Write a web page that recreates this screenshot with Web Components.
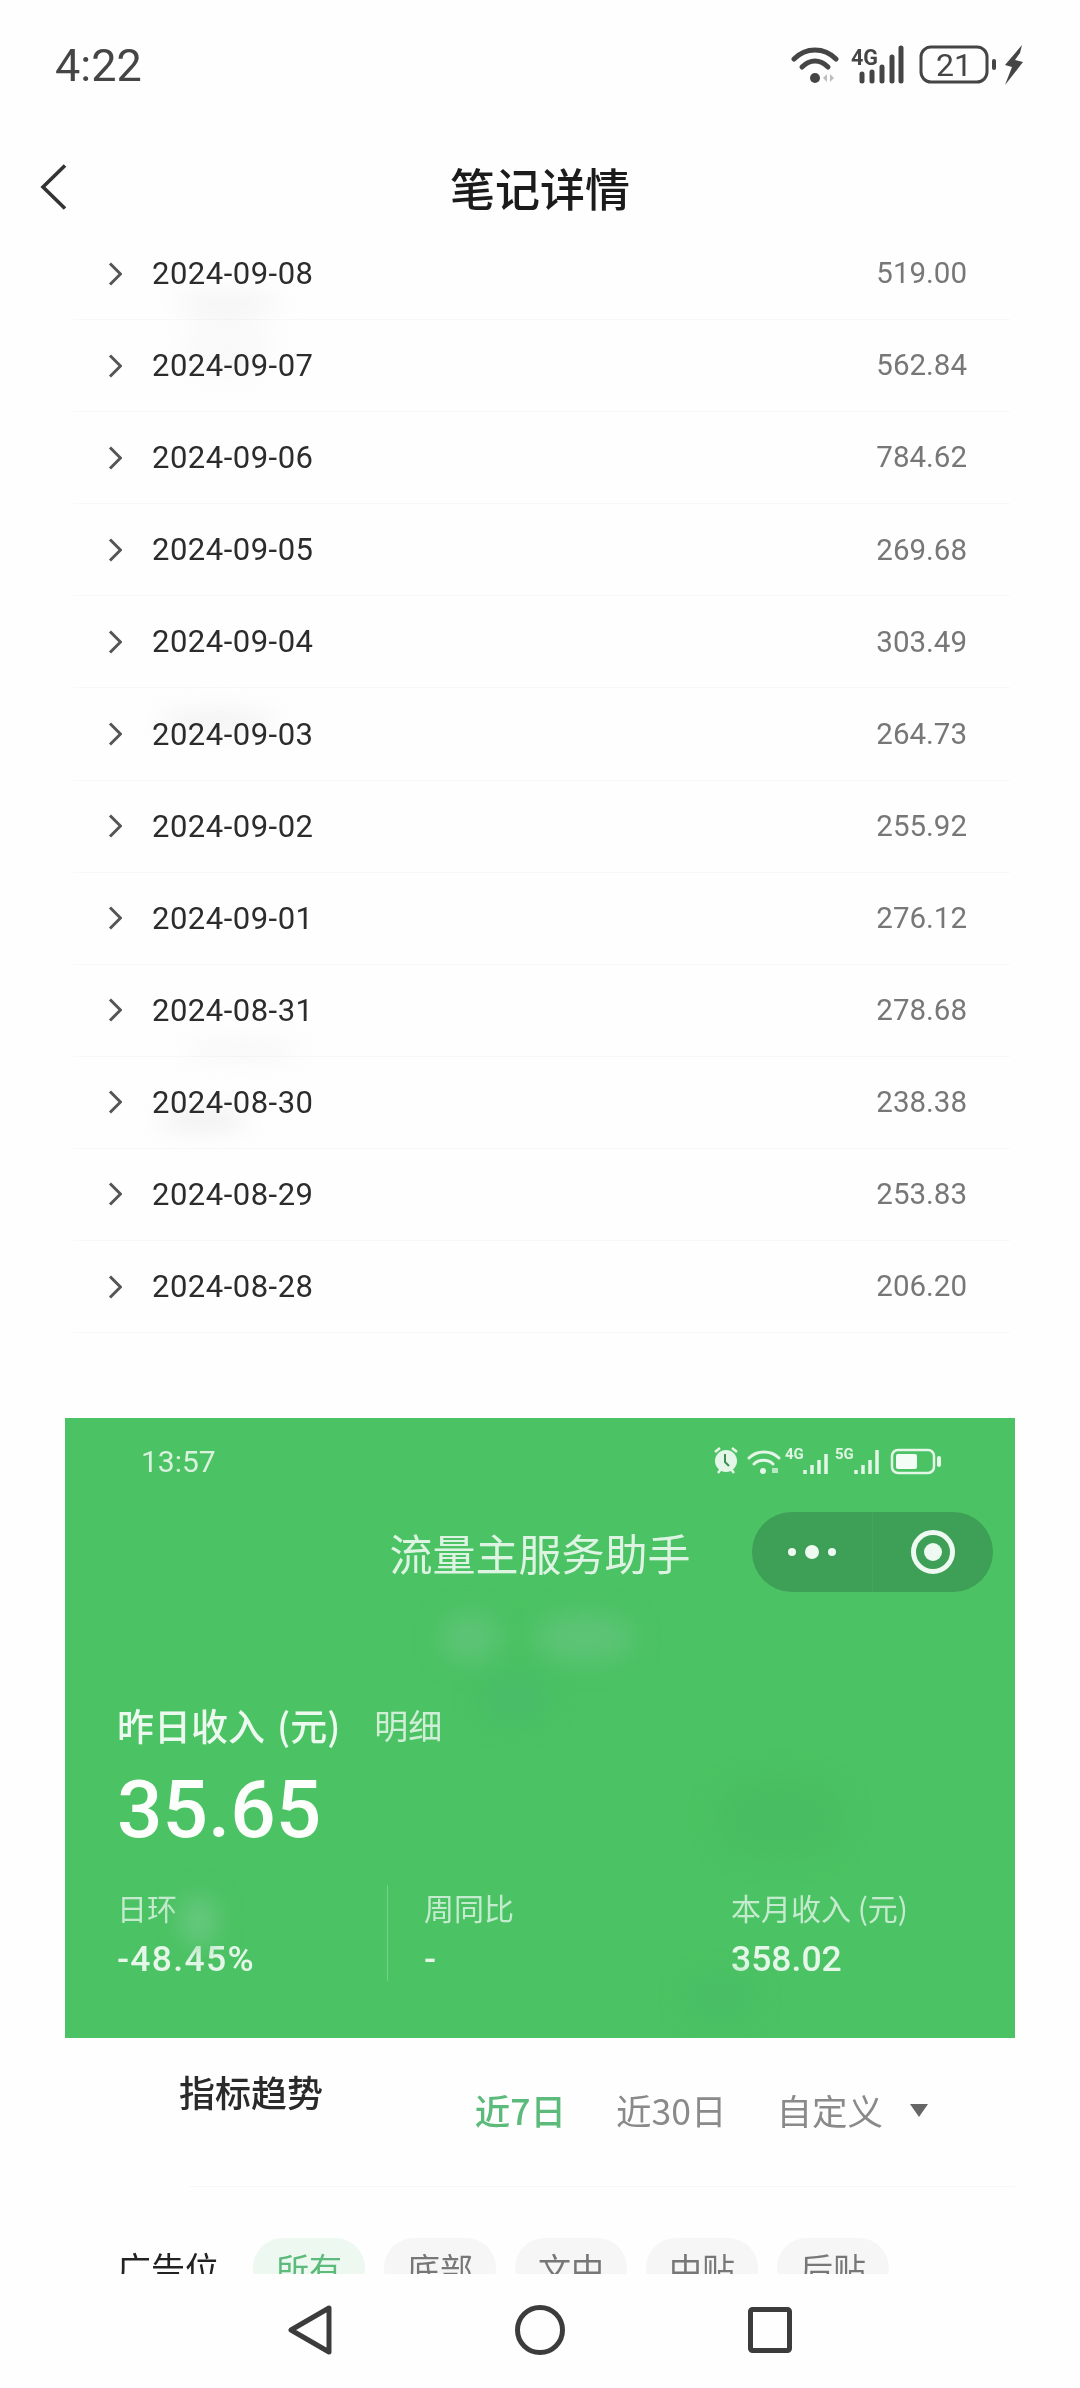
<!DOCTYPE html>
<html lang="zh">
<head>
<meta charset="utf-8">
<title>笔记详情</title>
<style>
	html, body {
		margin: 0;
		background: #fefefe;
		font-family: Roboto, "Noto Sans CJK SC", sans-serif;
	}
</style>
</head>
<body>
<phone-page>
	<status-bar slot="top"></status-bar>
	<nav-header slot="top" title="笔记详情"></nav-header>
	<income-list>
		<income-row date="2024-09-08" amount="519.00"></income-row>
		<income-row date="2024-09-07" amount="562.84"></income-row>
		<income-row date="2024-09-06" amount="784.62"></income-row>
		<income-row date="2024-09-05" amount="269.68"></income-row>
		<income-row date="2024-09-04" amount="303.49"></income-row>
		<income-row date="2024-09-03" amount="264.73"></income-row>
		<income-row date="2024-09-02" amount="255.92"></income-row>
		<income-row date="2024-09-01" amount="276.12"></income-row>
		<income-row date="2024-08-31" amount="278.68"></income-row>
		<income-row date="2024-08-30" amount="238.38"></income-row>
		<income-row date="2024-08-29" amount="253.83"></income-row>
		<income-row date="2024-08-28" amount="206.20"></income-row>
		<blur-spot style="left:100px;top:68px;width:110px;height:14px;background:#efefef;mix-blend-mode:multiply"></blur-spot>
		<blur-spot style="left:110px;top:90px;width:90px;height:60px;background:#fafafa;mix-blend-mode:multiply"></blur-spot>
		<blur-spot style="left:85px;top:486px;width:120px;height:14px;background:#ececec;mix-blend-mode:multiply"></blur-spot>
		<blur-spot style="left:85px;top:885px;width:90px;height:14px;background:#e8e8e8;mix-blend-mode:multiply"></blur-spot>
		<blur-spot style="left:110px;top:815px;width:120px;height:14px;background:#f4f4f4;mix-blend-mode:multiply"></blur-spot>
	</income-list>
	<income-card>
		<blur-spot style="left:375px;top:195px;width:60px;height:50px;background:#5cc476"></blur-spot>
		<blur-spot style="left:470px;top:195px;width:100px;height:50px;background:#5cc476"></blur-spot>
		<blur-spot style="left:415px;top:255px;width:70px;height:50px;background:#49bc68"></blur-spot>
		<blur-spot style="left:116px;top:478px;width:36px;height:50px;background:#68c880"></blur-spot>
		<blur-spot style="left:650px;top:360px;width:130px;height:80px;background:#49bd61"></blur-spot>
		<blur-spot style="left:620px;top:560px;width:70px;height:40px;background:#49bd66"></blur-spot>
	</income-card>
	<trend-tabs></trend-tabs>
	<ad-filter></ad-filter>
	<nav-keys slot="bottom"></nav-keys>
</phone-page>

<script>
// page frame: fixed top and bottom, middle is clipped like a scroll area
class PhonePage extends HTMLElement {
	constructor(){
		super();
		this.attachShadow({mode:"open"});
		this.shadowRoot.innerHTML = `
			<style>
				:host {
					display: flex;
					flex-direction: column;
					width: 1080px;
					height: 2388px;
					overflow: hidden;
					background: #fefefe;
				}
				main {
					height: 2046px;
					overflow: hidden;
					position: relative;
				}
			</style>
			<slot name="top"></slot>
			<main><slot></slot></main>
			<slot name="bottom"></slot>
		`;
	}
}
customElements.define("phone-page",PhonePage);

class BlurSpot extends HTMLElement {
	constructor(){
		super();
		this.attachShadow({mode:"open"});
		this.shadowRoot.innerHTML = `
			<style>
				:host {
					display: block;
					position: absolute;
					border-radius: 50%;
					filter: blur(12px);
					pointer-events: none;
				}
			</style>
		`;
	}
}
customElements.define("blur-spot",BlurSpot);

class StatusBar extends HTMLElement {
	constructor(){
		super();
		this.attachShadow({mode:"open"});
		this.shadowRoot.innerHTML = `
			<style>
				:host {
					display: flex;
					align-items: center;
					justify-content: space-between;
					height: 130px;
					padding: 0 57px 0 55px;
					color: #454545;
				}
				.time {
					font: 400 45px/1 Roboto, sans-serif;
				}
				.icons {
					display: flex;
					align-items: center;
				}
				svg {
					display: block;
				}
				text {
					font-family: Roboto, sans-serif;
					fill: #454545;
				}
			</style>
			<span class="time">4:22</span>
			<div class="icons">
				<svg width="48" height="40" viewBox="0 0 48 40">
					<path d="M3 14C15 2 33 2 45 14" fill="none" stroke="#454545" stroke-width="5" stroke-linecap="round"/>
					<path d="M11 22C19 14 29 14 37 22" fill="none" stroke="#454545" stroke-width="5" stroke-linecap="round"/>
					<circle cx="24" cy="33" r="5" fill="#454545"/>
					<path d="M32 33l4-4v8zM39 29l4 4-4 4z" fill="#bdbdbd"/>
				</svg>
				<svg style="margin-left:12px" width="54" height="40" viewBox="0 0 54 40">
					<text x="0" y="20" font-size="22" font-weight="700" textLength="27" lengthAdjust="spacingAndGlyphs">4G</text>
					<g stroke="#454545" stroke-width="5" stroke-linecap="round">
						<path d="M11 29V36M21 27V36M31 22V36M41 12V36M50 3V36"/>
					</g>
				</svg>
				<svg style="margin-left:14px" width="78" height="40" viewBox="0 0 78 40">
					<rect x="2" y="2" width="66" height="35" rx="10" fill="none" stroke="#454545" stroke-width="3"/>
					<text x="35" y="31" font-size="32" text-anchor="middle">21</text>
					<rect x="73" y="14" width="4" height="11" rx="2" fill="#454545"/>
				</svg>
				<svg style="margin-left:7px" width="19" height="40" viewBox="0 0 19 40">
					<path d="M18 0L1 20l7 2-7 18L19 17l-8-2 5-7z" fill="#454545"/>
				</svg>
			</div>
		`;
	}
}
customElements.define("status-bar",StatusBar);

class NavHeader extends HTMLElement {
	constructor(){
		super();
		this.attachShadow({mode:"open"});
		this.shadowRoot.innerHTML = `
			<style>
				:host {
					display: grid;
					grid-template-columns: 1fr auto 1fr;
					align-items: center;
					box-sizing: border-box;
					height: 98px;
					padding-top: 16px;
				}
				svg {
					display: block;
					margin-left: 40px;
				}
				h1 {
					margin: 0;
					font: 500 45px/1 "Noto Sans CJK SC", sans-serif;
					color: #1b1b1b;
				}
			</style>
			<svg width="28" height="46" viewBox="0 0 28 46">
				<path d="M25 1.5L3 23l22 21.5" fill="none" stroke="#333" stroke-width="3.6"/>
			</svg>
			<h1></h1>
			<span></span>
		`;
		this.shadowRoot.querySelector("h1").textContent = this.getAttribute("title");
	}
}
customElements.define("nav-header",NavHeader);

class IncomeList extends HTMLElement {
	constructor(){
		super();
		this.attachShadow({mode:"open"});
		this.shadowRoot.innerHTML = `
			<style>
				:host {
					display: block;
					position: relative;
					margin: 0 70px 0 73px;
				}
			</style>
			<slot></slot>
		`;
	}
}
customElements.define("income-list",IncomeList);

class IncomeRow extends HTMLElement {
	constructor(){
		super();
		this.attachShadow({mode:"open"});
		this.shadowRoot.innerHTML = `
			<style>
				:host {
					display: flex;
					align-items: center;
					box-sizing: border-box;
					height: 92.1px;
					padding: 0 43px 0 35px;
					border-bottom: 1.5px solid #f8f8f8;
				}
				svg {
					display: block;
				}
				.date {
					margin-left: 30px;
					font: 400 31px/1 Roboto, sans-serif;
					letter-spacing: .5px;
					color: #2c2c2c;
				}
				.amount {
					margin-left: auto;
					padding-top: 1px;
					font: 400 29.5px/1 Roboto, sans-serif;
					color: #777;
				}
			</style>
			<svg width="14" height="24" viewBox="0 0 14 24">
				<path d="M2 1.5L12.5 12 2 22.5" fill="none" stroke="#555" stroke-width="3"/>
			</svg>
			<span class="date"></span>
			<span class="amount"></span>
		`;
		this.shadowRoot.querySelector(".date").textContent = this.getAttribute("date");
		this.shadowRoot.querySelector(".amount").textContent = this.getAttribute("amount");
	}
}
customElements.define("income-row",IncomeRow);

class IncomeCard extends HTMLElement {
	constructor(){
		super();
		this.attachShadow({mode:"open"});
		this.shadowRoot.innerHTML = `
			<style>
				:host {
					display: block;
					position: relative;
					box-sizing: border-box;
					width: 950px;
					height: 620px;
					margin: 85px 0 0 65px;
					overflow: hidden;
					background: #4bc263;
					color: #e6f6e9;
					font-family: Roboto, "Noto Sans CJK SC", sans-serif;
				}
				.phone {
					display: flex;
					align-items: center;
					justify-content: space-between;
					height: 40px;
					padding: 23px 73px 0 76px;
				}
				.clock {
					font-size: 30px;
					color: #d9f2dd;
				}
				.phone svg {
					display: block;
				}
				.phone text {
					font: 700 15px Roboto, sans-serif;
					fill: #e0f5e4;
				}
				.bar {
					display: grid;
					grid-template-columns: 1fr auto 1fr;
					align-items: center;
					margin-top: 31px;
				}
				.bar h2 {
					margin: 0;
					font: 400 43px/80px "Noto Sans CJK SC", sans-serif;
					color: #def4e3;
				}
				.capsule {
					justify-self: end;
					display: flex;
					align-items: center;
					box-sizing: border-box;
					width: 241px;
					height: 80px;
					margin-right: 22px;
					border-radius: 40px;
					background: #3e9f57;
				}
				.capsule div {
					flex: 1;
					height: 100%;
					display: flex;
					align-items: center;
					justify-content: center;
				}
				.capsule div + div {
					border-left: 1px solid #45a65e;
				}
				.body {
					padding: 111px 0 0 52px;
				}
				.label {
					display: flex;
					font: 500 37px/44px "Noto Sans CJK SC", sans-serif;
					color: #ecf9ef;
				}
				.label .paren {
					margin-left: 12px;
				}
				.label .more {
					margin-left: 34px;
					font-weight: 400;
					font-size: 34px;
					color: #cfeed6;
				}
				.big {
					margin-top: 18px;
					font: 500 80px/90px Roboto, sans-serif;
					color: #fbfefb;
				}
				.stats {
					display: grid;
					grid-template-columns: 270px 344px 1fr;
					margin-top: 30px;
				}
				.stats > div + div {
					padding-left: 36px;
				}
				.stats > div:nth-child(2) {
					border-left: 1px solid #72cf86;
				}
				.stats > div:nth-child(3) {
					padding-left: 0;
				}
				.k {
					font: 400 30px/44px "Noto Sans CJK SC", sans-serif;
					color: #c5ebcf;
				}
				.v {
					margin-top: 8px;
					font: 500 35.5px/44px Roboto, sans-serif;
					color: #e6f7ea;
				}
				.wide {
					letter-spacing: 1.3px;
				}
			</style>
			<div class="phone">
				<span class="clock">13:57</span>
				<svg width="230" height="30" viewBox="0 0 230 30">
					<circle cx="14" cy="15" r="11" fill="#e3f6e7"/>
					<path d="M3 6l5-4M25 6l-5-4M6 27l3-4M22 27l-3-4" stroke="#e3f6e7" stroke-width="2.5"/>
					<path d="M13 8v8l4 4" fill="none" stroke="#3f8f57" stroke-width="2"/>
					<path d="M37 12C45 4 59 4 67 12M42 18C47 13 56 13 61 18" fill="none" stroke="#e3f6e7" stroke-width="3" stroke-linecap="round"/>
					<circle cx="51" cy="25" r="3" fill="#e3f6e7"/>
					<path d="M60 22h6v5h-6z" fill="#b9e6c4"/>
					<text x="73" y="13">4G</text>
					<path d="M93 28v-4M100 28v-9M107 28v-14M114 28v-20" stroke="#e3f6e7" stroke-width="3.5"/>
					<text x="123" y="13">5G</text>
					<path d="M141 28v-4M148 28v-9M155 28v-14M162 28v-24" stroke="#e3f6e7" stroke-width="3.5" transform="translate(3)"/>
					<rect x="180" y="4" width="42" height="23" rx="6" fill="none" stroke="#e3f6e7" stroke-width="2.5"/>
					<rect x="184" y="8" width="21" height="15" rx="2" fill="#f4fcf6"/>
					<rect x="225" y="10" width="4" height="11" rx="2" fill="#e3f6e7"/>
				</svg>
			</div>
			<div class="bar">
				<span></span>
				<h2>流量主服务助手</h2>
				<div class="capsule">
					<div>
						<svg width="50" height="20" viewBox="0 0 50 20">
							<circle cx="5" cy="10" r="4" fill="#eef9f1"/>
							<circle cx="25" cy="10" r="7" fill="#eef9f1"/>
							<circle cx="45" cy="10" r="4" fill="#eef9f1"/>
						</svg>
					</div>
					<div>
						<svg width="46" height="46" viewBox="0 0 46 46">
							<circle cx="23" cy="23" r="19.5" fill="none" stroke="#eef9f1" stroke-width="5"/>
							<circle cx="23" cy="23" r="9" fill="#eef9f1"/>
						</svg>
					</div>
				</div>
			</div>
			<div class="body">
				<div class="label">昨日收入<span class="paren">(元)</span><span class="more">明细</span></div>
				<div class="big">35.65</div>
				<div class="stats">
					<div><div class="k">日环</div><div class="v wide">-48.45%</div></div>
					<div><div class="k">周同比</div><div class="v">-</div></div>
					<div><div class="k">本月收入 (元)</div><div class="v">358.02</div></div>
				</div>
			</div>
			<slot></slot>
		`;
	}
}
customElements.define("income-card",IncomeCard);

class TrendTabs extends HTMLElement {
	constructor(){
		super();
		this.attachShadow({mode:"open"});
		this.shadowRoot.innerHTML = `
			<style>
				:host {
					display: flex;
					align-items: flex-start;
					box-sizing: border-box;
					height: 149px;
					margin: 0 65px;
					padding: 28px 86px 0 114px;
					font-family: "Noto Sans CJK SC", sans-serif;
					position: relative;
				}
				h3 {
					margin: 0;
					font: 500 36px/50px "Noto Sans CJK SC", sans-serif;
					color: #2a2a2a;
				}
				.tabs {
					display: flex;
					align-items: center;
					gap: 50px;
					margin: 19px 0 0 auto;
					font-size: 35.5px;
					line-height: 50px;
					color: #8a8a8a;
				}
				.on {
					color: #5cba7a;
					font-weight: 500;
				}
				.drop {
					display: flex;
					align-items: center;
					gap: 26px;
				}
				svg {
					display: block;
				}
				.line {
					position: absolute;
					left: 125px;
					right: 0;
					bottom: 0;
					border-top: 1.5px solid #f6f6f6;
				}
			</style>
			<h3>指标趋势</h3>
			<div class="tabs">
				<span class="on">近7日</span>
				<span>近30日</span>
				<span class="drop">自定义
					<svg width="20" height="14" viewBox="0 0 20 14"><path d="M1 1h18L10 14z" fill="#666"/></svg>
				</span>
			</div>
			<div class="line"></div>
		`;
	}
}
customElements.define("trend-tabs",TrendTabs);

class AdFilter extends HTMLElement {
	constructor(){
		super();
		this.attachShadow({mode:"open"});
		this.shadowRoot.innerHTML = `
			<style>
				:host {
					display: flex;
					align-items: center;
					margin: 51px 0 0 117px;
					font-family: "Noto Sans CJK SC", sans-serif;
				}
				.name {
					width: 136px;
					font-size: 34px;
					line-height: 60px;
					color: #222;
				}
				.chips {
					display: flex;
					gap: 19px;
				}
				.chips span {
					width: 112px;
					height: 60px;
					border-radius: 30px;
					text-align: center;
					font-size: 33px;
					line-height: 60px;
					background: #f6f6f7;
					color: #777;
				}
				.chips .on {
					background: #edf8f1;
					color: #5cba7a;
				}
			</style>
			<span class="name">广告位</span>
			<div class="chips">
				<span class="on">所有</span>
				<span>底部</span>
				<span>文中</span>
				<span>中贴</span>
				<span>后贴</span>
			</div>
		`;
	}
}
customElements.define("ad-filter",AdFilter);

class NavKeys extends HTMLElement {
	constructor(){
		super();
		this.attachShadow({mode:"open"});
		this.shadowRoot.innerHTML = `
			<style>
				:host {
					display: flex;
					align-items: center;
					justify-content: center;
					gap: 183px;
					height: 114px;
					background: #fefefe;
				}
				svg {
					display: block;
					margin-bottom: 2px;
				}
			</style>
			<svg width="44" height="50" viewBox="0 0 44 50">
				<path d="M41 3v44L3 25z" fill="none" stroke="#3c3c3c" stroke-width="5" stroke-linejoin="round"/>
			</svg>
			<svg width="50" height="50" viewBox="0 0 50 50">
				<circle cx="25" cy="25" r="22.5" fill="none" stroke="#3c3c3c" stroke-width="5"/>
			</svg>
			<svg width="44" height="46" viewBox="0 0 44 46">
				<rect x="2.5" y="2.5" width="39" height="41" rx="2" fill="none" stroke="#3c3c3c" stroke-width="5"/>
			</svg>
		`;
	}
}
customElements.define("nav-keys",NavKeys);
</script>
</body>
</html>
